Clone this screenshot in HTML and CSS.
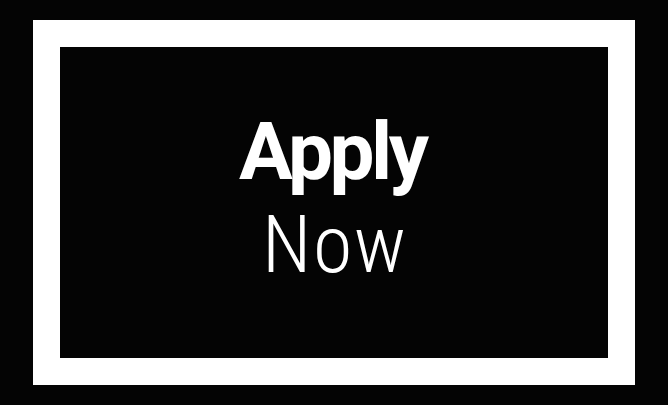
FILE: index.html
```html
<!DOCTYPE html>
<html>
<head>
<meta charset="utf-8">
<link rel="stylesheet" href="styles.css">
</head>
<body>
<div class="frame">
  <div class="cta">
    <span class="apply">Apply</span>
    <span class="now">Now</span>
  </div>
</div>
</body>
</html>
```
FILE: styles.css
```css
html, body {
  margin: 0;
  padding: 0;
  background: #040404;
}
body {
  padding: 20px 33px;
  width: 668px;
  height: 405px;
  box-sizing: border-box;
}
.frame {
  border: 27px solid #fff;
  height: 365px;
  box-sizing: border-box;
  background: #040404;
  display: flex;
  align-items: center;
  justify-content: center;
}
.cta {
  display: flex;
  flex-direction: column;
  align-items: center;
  color: #fff;
  font-family: Roboto, "Liberation Sans", sans-serif;
  font-size: 80px;
  line-height: 93px;
  margin-top: -7px;
}
.apply {
  font-weight: 700;
  letter-spacing: -3.5px;
  margin-right: 3.5px;
}
.now {
  font-weight: 300;
  font-stretch: condensed;
  letter-spacing: 1.5px;
  margin-right: -1.5px;
}
```
